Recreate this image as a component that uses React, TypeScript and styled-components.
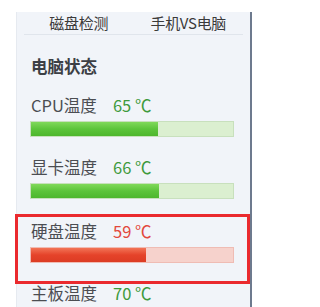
import React from 'react';
import styled, { createGlobalStyle } from 'styled-components';

type Level = 'ok' | 'hot';

type TempItem = {
  label: string;
  value: number;
  percent: number;
  level: Level;
  highlight?: boolean;
};

const items: TempItem[] = [
  { label: 'CPU温度', value: 65, percent: 62.7, level: 'ok' },
  { label: '显卡温度', value: 66, percent: 63.2, level: 'ok' },
  { label: '硬盘温度', value: 59, percent: 56.9, level: 'hot', highlight: true },
  { label: '主板温度', value: 70, percent: 66, level: 'ok' },
];

const GlobalStyle = createGlobalStyle`
  html, body {
    margin: 0;
    padding: 0;
    background: #ffffff;
    overflow: hidden;
  }
  body {
    font-family: 'Noto Sans CJK SC', 'Liberation Sans', sans-serif;
  }
`;

const Page = styled.div`
  width: 300px;
  height: 307px;
  padding: 12px 0 0 16px;
  box-sizing: border-box;
  background: #ffffff;
  overflow: hidden;
`;

const Panel = styled.div`
  width: 236px;
  height: 300px;
  box-sizing: border-box;
  background: #f1f4f9;
  border-left: 1px solid #e6eaf0;
  border-right: 2px solid #6d7a8e;
  display: flex;
  flex-direction: column;
`;

const Tabs = styled.div`
  display: flex;
  height: 30px;
  margin: 0 7px 0 7px;
  border-bottom: 1px solid #e0e5ec;
`;

const Tab = styled.div`
  flex: 1;
  text-align: center;
  font-size: 15px;
  line-height: 22px;
  color: #3a3a3a;
  letter-spacing: -0.3px;
`;

const Body = styled.div`
  display: flex;
  flex-direction: column;
  padding: 19px 16px 0 13px;
`;

const Title = styled.div`
  font-size: 16.5px;
  line-height: 24px;
  font-weight: bold;
  color: #3c3f45;
  padding-left: 1px;
`;

const List = styled.div`
  display: flex;
  flex-direction: column;
  gap: 18px;
  margin-top: 15px;
`;

const Row = styled.div<{ $highlight?: boolean }>`
  position: relative;
  display: flex;
  flex-direction: column;
  margin-top: ${(p) => (p.$highlight ? '2px' : '0')};

  ${(p) =>
    p.$highlight &&
    `
    &::after {
      content: '';
      position: absolute;
      top: -5px;
      left: -15px;
      right: -16px;
      bottom: -21px;
      border: 3px solid #ea2a2e;
      pointer-events: none;
    }
  `}
`;

const Label = styled.div`
  display: flex;
  align-items: center;
  gap: 16px;
  height: 24px;
  padding-left: 1px;
  font-size: 16.5px;
  color: #4b4d52;
`;

const Value = styled.span<{ $level: Level }>`
  font-size: 16.5px;
  color: ${(p) => (p.$level === 'hot' ? '#e2483c' : '#3e9a3c')};
`;

const Track = styled.div<{ $level: Level }>`
  margin-top: 4px;
  width: 204px;
  height: 16px;
  box-sizing: border-box;
  border: 1px solid ${(p) => (p.$level === 'hot' ? '#efbcb4' : '#c8e0bd')};
  background: ${(p) => (p.$level === 'hot' ? '#f6d2cc' : '#dbefd0')};
  display: flex;
`;

const Fill = styled.div<{ $level: Level }>`
  height: 100%;
  background: ${(p) =>
    p.$level === 'hot'
      ? 'linear-gradient(#f27456, #e5432a 50%, #dc3c24)'
      : 'linear-gradient(#80d95a, #5cc43a 50%, #4db72d)'};
`;

export default function App() {
  return (
    <Page>
      <GlobalStyle />
      <Panel>
        <Tabs>
          <Tab>磁盘检测</Tab>
          <Tab>手机VS电脑</Tab>
        </Tabs>
        <Body>
          <Title>电脑状态</Title>
          <List>
            {items.map((it) => (
              <Row key={it.label} $highlight={it.highlight}>
                <Label>
                  {it.label}
                  <Value $level={it.level}>{it.value} ℃</Value>
                </Label>
                <Track $level={it.level}>
                  <Fill $level={it.level} style={{ width: `${it.percent}%` }} />
                </Track>
              </Row>
            ))}
          </List>
        </Body>
      </Panel>
    </Page>
  );
}
